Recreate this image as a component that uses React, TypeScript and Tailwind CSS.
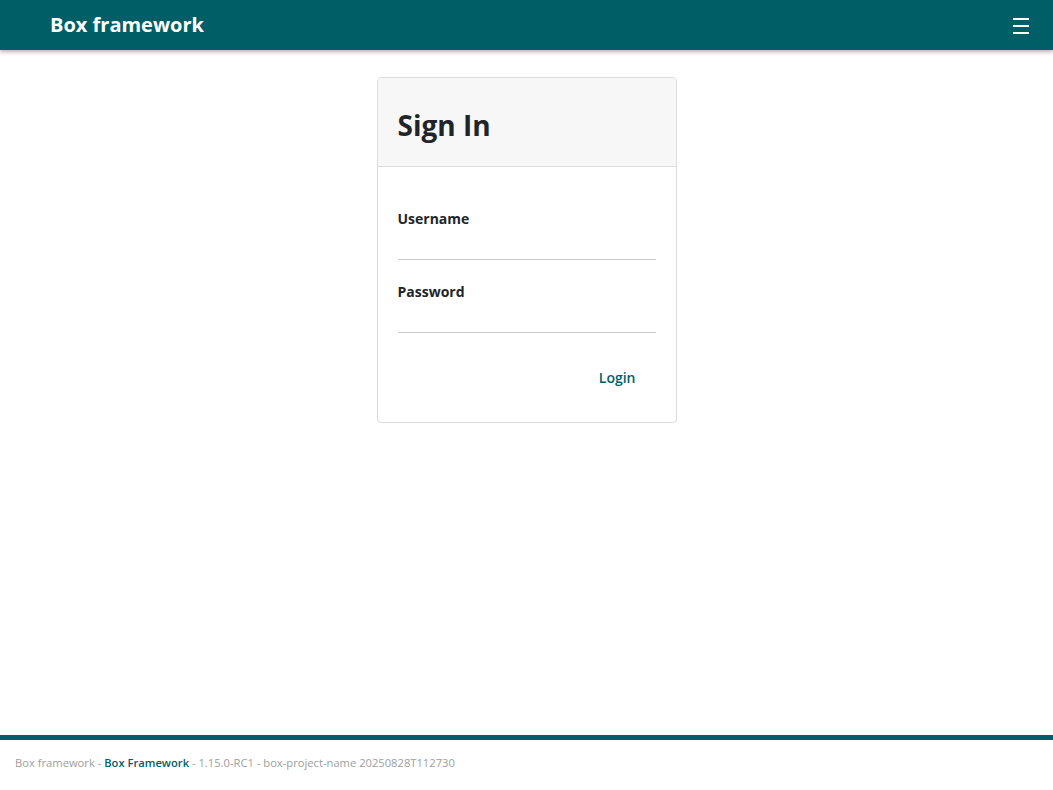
import React from "react";

export default function App() {
  return (
    <div
      className="min-h-[790px] flex flex-col bg-white text-[#212529]"
      style={{ fontFamily: '"Open Sans", "Noto Sans", sans-serif' }}
    >
      <header className="h-[50px] bg-[#005f66] flex items-center justify-between pl-[50px] pr-[24px] shadow-[0_2px_4px_rgba(0,0,0,0.3)] relative z-10">
        <span className="text-white font-bold text-[20px] leading-none">Box framework</span>
        <svg width="16" height="16" viewBox="0 0 16 16" className="mt-[2px]">
          <rect x="0" y="0" width="16" height="2" fill="white" />
          <rect x="0" y="7" width="16" height="2" fill="white" />
          <rect x="0" y="14" width="16" height="2" fill="white" />
        </svg>
      </header>

      <main className="flex-1 flex justify-center items-start pt-[27px]">
        <div className="w-[300px] border border-[#dcdcdc] rounded-[4px] overflow-hidden">
          <div className="bg-[#f7f7f7] border-b border-[#dcdcdc] px-[20px] pt-[30px] pb-[24px]">
            <h3 className="text-[28px] leading-[34px] font-bold text-[#212529]">Sign In</h3>
          </div>
          <div className="px-[20px] pt-[41px] pb-[26px]">
            <label className="block text-[14px] leading-[22px] font-bold">Username</label>
            <input className="block w-full h-[30px] border-b border-[#cccccc] outline-none text-[14px]" />
            <label className="block mt-[21px] text-[14px] leading-[22px] font-bold">Password</label>
            <input type="password" className="block w-full h-[30px] border-b border-[#cccccc] outline-none text-[14px]" />
            <div className="flex justify-end mt-[27px]">
              <button className="pl-[21px] pr-[20px] py-[8px] text-[14px] leading-[20px] font-semibold text-[#005f66]">
                Login
              </button>
            </div>
          </div>
        </div>
      </main>

      <footer className="border-t-[5px] border-[#005f66] h-[55px] flex items-center px-[15px] pb-[3px]">
        <span className="text-[11.2px] text-[#9e9e9e]">
          Box framework - <span className="text-[#005f66] font-semibold">Box Framework</span> - 1.15.0-RC1 - box-project-name 20250828T112730
        </span>
      </footer>
    </div>
  );
}
